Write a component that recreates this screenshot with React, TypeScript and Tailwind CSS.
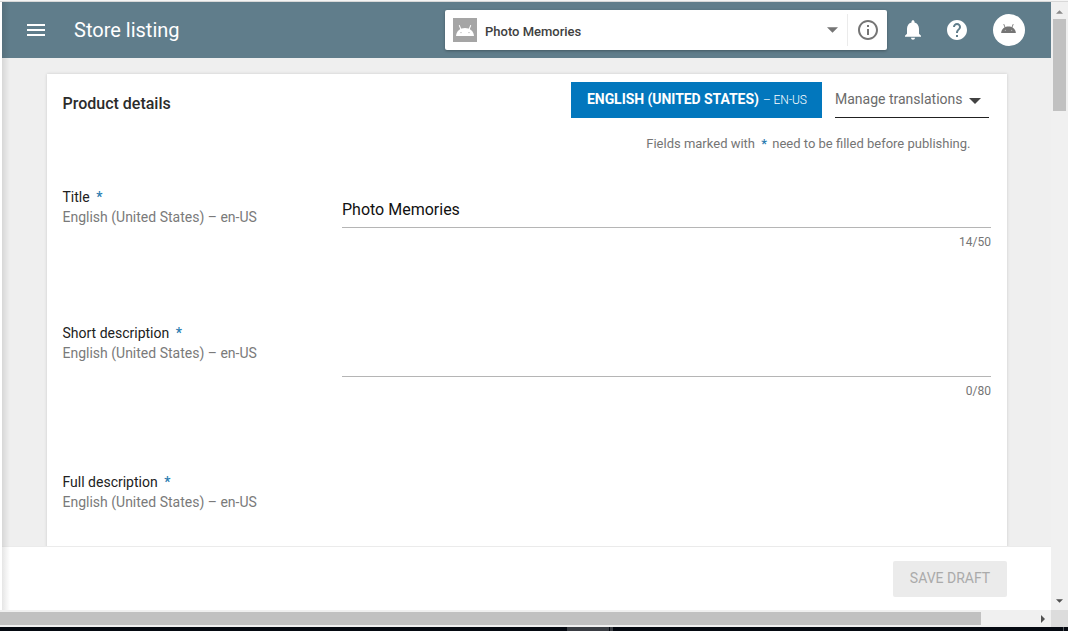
import type { ReactNode } from 'react';

function AndroidHead({ className, eye }: { className: string; eye: string }) {
  return (
    <svg viewBox="0 0 18 11" className={className} fill="currentColor">
      <path d="M0 11C.4 6 4 3 9 3s8.600 3 9 8z" />
      <path d="M3.400 .6l1.600 4M14.600 .6l-1.600 4" stroke="currentColor" strokeWidth="1.100" strokeLinecap="round" />
      <circle cx="5" cy="7.6" r=".6" fill={eye} />
      <circle cx="13" cy="7.6" r=".6" fill={eye} />
    </svg>
  );
}

function Caret({ className }: { className: string }) {
  return (
    <svg viewBox="0 0 12 6" className={className} fill="currentColor">
      <path d="M0 0h12L6 6z" />
    </svg>
  );
}

function Header() {
  return (
    <header className="flex h-14 shrink-0 items-center bg-[#607d8b] text-white">
      <svg viewBox="0 0 18 12" className="ml-[25px] h-3 w-[18px]" fill="currentColor">
        <path d="M0 0h18v2H0zM0 5h18v2H0zM0 10h18v2H0z" />
      </svg>
      <h1 className="ml-[29px] w-[371px] text-[20px] leading-6 whitespace-nowrap">Store listing</h1>
      <div className="flex h-10 w-[442px] items-center rounded-[2px] bg-white shadow-[0_1px_3px_rgba(0,0,0,0.3)]">
        <div className="ml-2 flex size-6 items-center justify-center bg-[#a5a5a5]">
          <AndroidHead className="h-[11px] w-[18px]" eye="#a5a5a5" />
        </div>
        <span className="mt-[3px] ml-2 flex-1 text-[13px] leading-5 font-medium text-[#404040]">Photo Memories</span>
        <Caret className="h-[6px] w-[11px] text-[#757575]" />
        <div className="ml-[9px] h-8 w-px bg-[#ebebeb]" />
        <svg viewBox="2 2 20 20" className="mr-[9px] ml-[10px] size-5" fill="#757575">
          <path d="M11 17h2v-6h-2v6zm1-15C6.48 2 2 6.48 2 12s4.48 10 10 10 10-4.48 10-10S17.52 2 12 2zm0 18c-4.41 0-8-3.59-8-8s3.590-8 8-8 8 3.590 8 8-3.590 8-8 8zM11 9h2V7h-2v2z" />
        </svg>
      </div>
      <svg viewBox="4 2.500 16 19.500" className="ml-[18px] h-5 w-4" fill="currentColor">
        <path d="M12 22c1.100 0 2-.9 2-2h-4c0 1.100.9 2 2 2zm6-6v-5c0-3.070-1.630-5.640-4.500-6.320V4c0-.83-.67-1.500-1.500-1.500s-1.500.67-1.500 1.500v.68C7.640 5.360 6 7.920 6 11v5l-2 2v1h16v-1l-2-2z" />
      </svg>
      <svg viewBox="2 2 20 20" className="ml-[26px] size-5" fill="currentColor">
        <path d="M12 2C6.480 2 2 6.480 2 12s4.480 10 10 10 10-4.480 10-10S17.520 2 12 2zm1 17h-2v-2h2v2zm2.070-7.750l-.9.920C13.450 12.900 13 13.500 13 15h-2v-.5c0-1.100.45-2.100 1.170-2.830l1.240-1.260c.37-.36.59-.86.59-1.410 0-1.100-.9-2-2-2s-2 .9-2 2H8c0-2.210 1.790-4 4-4s4 1.790 4 4c0 .88-.36 1.680-.93 2.250z" />
      </svg>
      <div className="ml-[26px] flex size-8 items-center justify-center rounded-full bg-white text-[#757575]">
        <AndroidHead className="mr-px mb-[3px] h-[9px] w-[15px]" eye="#fff" />
      </div>
    </header>
  );
}

function FormRow({ label, className, children }: { label: string; className: string; children?: ReactNode }) {
  return (
    <div className={`flex shrink-0 ${className}`}>
      <div className="-ml-[0.5px] w-[279.5px] shrink-0 text-[14px] leading-5">
        <div className="text-[#212121]">
          {label} <span className="ml-[3px] font-medium text-[#2a7cb0]">*</span>
        </div>
        <div className="text-[#7a7a7a]">English (United States) – en-US</div>
      </div>
      <div className="flex-1">{children}</div>
    </div>
  );
}

function Field({ value, count, className }: { value: string; count: string; className: string }) {
  return (
    <>
      <div className={`flex items-end border-b border-[#b5b5b5] pb-[5px] text-[16px] leading-6 text-[#111] ${className}`}>{value}</div>
      <div className="mt-[5px] text-right text-[12px] leading-[18px] text-[#757575]">{count}</div>
    </>
  );
}

function ProductCard() {
  return (
    <section className="flex h-[480px] w-[960px] shrink-0 flex-col bg-white px-4 pt-2 shadow-[0_0_3px_rgba(0,0,0,0.15)]">
      <div className="flex h-9 shrink-0 items-center">
        <h2 className="mt-[7px] -ml-[0.5px] flex-1 text-[16px] leading-6 font-medium text-[#2b2b2b]">Product details</h2>
        <div className="flex h-9 w-[251px] items-center pb-px pl-4 bg-[#0277bd] text-[14px] whitespace-nowrap text-white">
          <span className="w-[172px] font-bold tracking-[-0.06px]">ENGLISH (UNITED STATES)</span>
          <span className="ml-1 text-[12px] font-light tracking-[-0.1px]">– EN-US</span>
        </div>
        <div className="mr-[2px] ml-[13px] flex h-9 w-[154px] items-center border-b border-[#212121] text-[14px] text-[#6b6b6b]">
          <span>Manage translations</span>
          <Caret className="mt-[3px] ml-[6px] h-[6px] w-3 text-[#424242]" />
        </div>
      </div>
      <p className="mt-4 mr-[20.5px] shrink-0 text-right text-[13px] leading-5 text-[#757575]">
        Fields marked with <span className="mr-[2px] ml-[3px] font-medium text-[#2a7cb0]">*</span> need to be filled before publishing.
      </p>
      <FormRow label="Title" className="mt-[33px] h-[136px]">
        <Field value="Photo Memories" count="14/50" className="h-[41px]" />
      </FormRow>
      <FormRow label="Short description" className="h-[149px]">
        <Field value="" count="0/80" className="h-[54px]" />
      </FormRow>
      <FormRow label="Full description" className="h-10" />
    </section>
  );
}

function VerticalScrollbar() {
  return (
    <div className="flex w-[17px] shrink-0 flex-col items-center justify-between bg-[#f0f0f0]">
      <div className="flex flex-col items-center">
        <Caret className="mt-[8px] h-[4px] w-[7px] rotate-180 text-[#8a8a8a]" />
        <div className="mt-[5px] h-[92px] w-[13px] bg-[#c1c1c1]" />
      </div>
      <Caret className="mb-[7px] h-[4px] w-[7px] text-[#505050]" />
    </div>
  );
}

export default function App() {
  return (
    <div className="flex h-[631px] w-[1068px] flex-col overflow-hidden bg-white font-['Roboto',sans-serif]">
      <div className="h-[2px] shrink-0 border-b border-[#d8d8d8] bg-[#f5f5f5]" />
      <div className="flex h-[608px] shrink-0">
        <div className="w-[2px] shrink-0 bg-white" />
        <div className="relative flex w-[1049px] shrink-0 flex-col">
          <Header />
          <main className="h-[488px] shrink-0 overflow-hidden bg-[#efefef] pt-4 pl-[45px]">
            <ProductCard />
          </main>
          <footer className="flex h-16 shrink-0 justify-end border-t border-[#ebebeb] bg-white pt-[14px] pr-11">
            <button className="h-9 w-[114px] rounded-[2px] bg-[#ebebeb] pb-[2px] text-[14px] font-normal text-[#aaa]">SAVE DRAFT</button>
          </footer>
          <div className="pointer-events-none absolute inset-y-0 left-0 w-2 bg-linear-to-r from-black/10 to-transparent" />
        </div>
        <VerticalScrollbar />
      </div>
      <div className="flex h-[17px] shrink-0 bg-[#f0f0f0]">
        <div className="flex w-[1051px] items-center justify-between">
          <div className="h-[13px] w-[981px] bg-[#c1c1c1]" />
          <svg viewBox="0 0 4 8" className="mr-[6px] h-2 w-1" fill="#505050">
            <path d="M0 0l4 4-4 4z" />
          </svg>
        </div>
        <div className="flex-1 bg-[#dcdcdc]" />
      </div>
      <div className="flex h-1 shrink-0 bg-[#050911]">
        <div className="ml-[567px] h-1 w-[42px] bg-[#3a3d43]" />
        <div className="ml-px h-1 w-[3px] bg-[#3a3d43]" />
        <div className="ml-[450px] h-1 w-px bg-[#55585d]" />
      </div>
    </div>
  );
}
